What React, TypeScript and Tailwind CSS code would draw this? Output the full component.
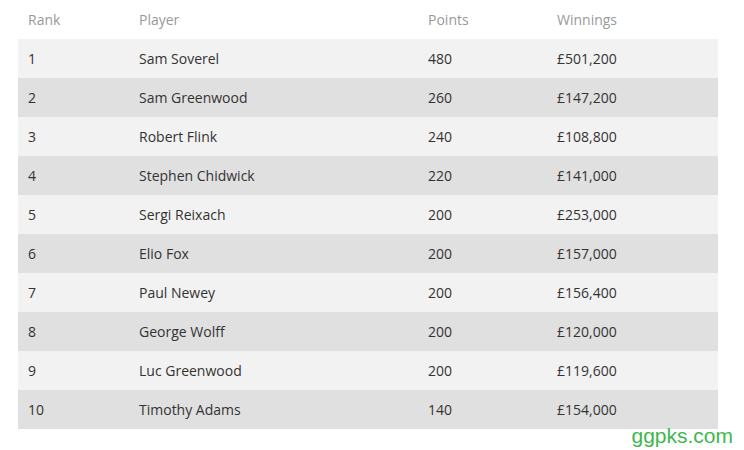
const rows = [
  { rank: 1, player: "Sam Soverel", points: 480, winnings: "£501,200" },
  { rank: 2, player: "Sam Greenwood", points: 260, winnings: "£147,200" },
  { rank: 3, player: "Robert Flink", points: 240, winnings: "£108,800" },
  { rank: 4, player: "Stephen Chidwick", points: 220, winnings: "£141,000" },
  { rank: 5, player: "Sergi Reixach", points: 200, winnings: "£253,000" },
  { rank: 6, player: "Elio Fox", points: 200, winnings: "£157,000" },
  { rank: 7, player: "Paul Newey", points: 200, winnings: "£156,400" },
  { rank: 8, player: "George Wolff", points: 200, winnings: "£120,000" },
  { rank: 9, player: "Luc Greenwood", points: 200, winnings: "£119,600" },
  { rank: 10, player: "Timothy Adams", points: 140, winnings: "£154,000" },
];

const cols = "grid grid-cols-[111px_289px_129px_171px]";

export default function App() {
  return (
    <div className="w-[744px] h-[450px] bg-white font-['Open_Sans',sans-serif] text-[14px]">
      <div className="pl-[18px] w-[718px]">
        <div className={`${cols} h-[39px] items-center text-[#999999]`}>
          <div className="pl-[10px]">Rank</div>
          <div className="pl-[10px]">Player</div>
          <div className="pl-[10px]">Points</div>
          <div className="pl-[10px]">Winnings</div>
        </div>
        {rows.map((r, i) => (
          <div
            key={r.rank}
            className={`${cols} h-[39px] items-center text-[#333333] ${
              i % 2 === 0 ? "bg-[#f2f2f2]" : "bg-[#e0e0e0]"
            }`}
          >
            <div className="pl-[10px]">{r.rank}</div>
            <div className="pl-[10px]">{r.player}</div>
            <div className="pl-[10px]">{r.points}</div>
            <div className="pl-[10px]">{r.winnings}</div>
          </div>
        ))}
      </div>
      <div className="flex justify-end pr-[11px] -mt-[5px]">
        <span className="font-['Liberation_Sans',sans-serif] text-[21px] leading-[23px] text-[#3cb94c]">
          ggpks.com
        </span>
      </div>
    </div>
  );
}
